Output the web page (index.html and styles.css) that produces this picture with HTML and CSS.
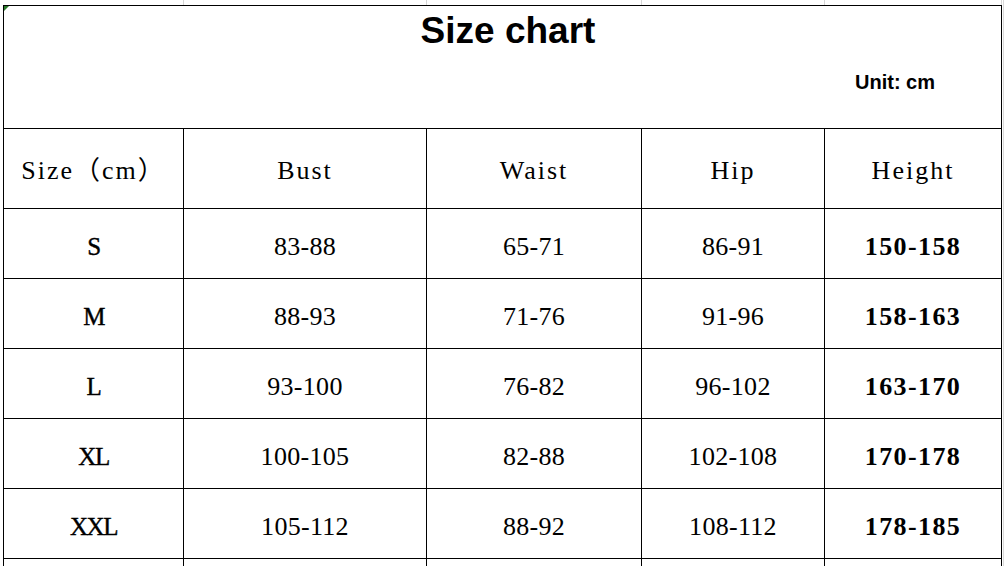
FILE: index.html
```html
<!DOCTYPE html>
<html>
<head>
<meta charset="utf-8">
<title>Size chart</title>
<link rel="stylesheet" href="styles.css">
</head>
<body>
<div class="sheet">
  <div class="sheet-main">
    <div class="strip">
      <div class="strip-cell w1"></div>
      <div class="strip-cell w2"></div>
      <div class="strip-cell w3"></div>
      <div class="strip-cell w4"></div>
      <div class="strip-cell w5"></div>
    </div>
    <div class="chart">
      <div class="title-cell">
        <span class="flag"></span>
        <div class="title">Size chart</div>
        <div class="unit">Unit: cm</div>
      </div>

      <div class="cell head">Size（cm）</div>
      <div class="cell head">Bust</div>
      <div class="cell head">Waist</div>
      <div class="cell head">Hip</div>
      <div class="cell head">Height</div>

      <div class="cell row size">S</div>
      <div class="cell row num">83-88</div>
      <div class="cell row num">65-71</div>
      <div class="cell row num">86-91</div>
      <div class="cell row num bold">150-158</div>

      <div class="cell row size">M</div>
      <div class="cell row num">88-93</div>
      <div class="cell row num">71-76</div>
      <div class="cell row num">91-96</div>
      <div class="cell row num bold">158-163</div>

      <div class="cell row size">L</div>
      <div class="cell row num">93-100</div>
      <div class="cell row num">76-82</div>
      <div class="cell row num">96-102</div>
      <div class="cell row num bold">163-170</div>

      <div class="cell row size">XL</div>
      <div class="cell row num">100-105</div>
      <div class="cell row num">82-88</div>
      <div class="cell row num">102-108</div>
      <div class="cell row num bold">170-178</div>

      <div class="cell row size">XXL</div>
      <div class="cell row num">105-112</div>
      <div class="cell row num">88-92</div>
      <div class="cell row num">108-112</div>
      <div class="cell row num bold">178-185</div>

      <div class="cell row"></div>
      <div class="cell row"></div>
      <div class="cell row"></div>
      <div class="cell row"></div>
      <div class="cell row"></div>
    </div>
  </div>
  <div class="edge"></div>
</div>
</body>
</html>
```

FILE: styles.css
```css
html, body {
  margin: 0;
  padding: 0;
  background: #ffffff;
  height: 566px;
  overflow: hidden;
}

.sheet {
  display: flex;
  align-items: stretch;
  margin-left: 3px;
  height: 640px;
}

.sheet-main {
  display: flex;
  flex-direction: column;
}

.strip {
  display: flex;
  height: 5px;
  margin-left: 1px;
}

.strip-cell {
  box-sizing: border-box;
  border-right: 1px solid #d6d6d6;
  height: 5px;
}

.w1 { width: 180px; }
.w2 { width: 243px; }
.w3 { width: 215px; }
.w4 { width: 183px; }
.w5 { width: 177px; }

.edge {
  width: 1px;
  margin-left: 1px;
  background: #d9d9d9;
}

.chart {
  display: grid;
  grid-template-columns: 180px 243px 215px 183px 177px;
  border-left: 1px solid #000;
  border-top: 1px solid #000;
}

.title-cell {
  grid-column: 1 / -1;
  position: relative;
  box-sizing: border-box;
  height: 123px;
  border-right: 1px solid #000;
  border-bottom: 1px solid #000;
  display: flex;
  flex-direction: column;
  font-family: "Liberation Sans", Arial, sans-serif;
  font-weight: bold;
  color: #000;
}

.flag {
  position: absolute;
  left: 0;
  top: 0;
  width: 0;
  height: 0;
  border-top: 5px solid #2b7a2b;
  border-right: 5px solid transparent;
}

.title {
  font-size: 37px;
  line-height: 37px;
  padding-top: 6px;
  padding-left: 11px;
  text-align: center;
}

.unit {
  font-size: 20px;
  line-height: 20px;
  margin-top: 23px;
  align-self: flex-end;
  margin-right: 66px;
}

.cell {
  box-sizing: border-box;
  border-right: 1px solid #000;
  border-bottom: 1px solid #000;
  display: flex;
  align-items: center;
  justify-content: center;
  color: #000;
  white-space: nowrap;
}

.head {
  height: 80px;
  padding-top: 4px;
  font-family: "Liberation Serif", "Noto Sans CJK SC", serif;
  font-size: 26px;
  line-height: 29px;
  letter-spacing: 2px;
}

.head:first-child {
  padding-left: 4px;
}

.row {
  height: 70px;
  padding-top: 6px;
}

.size {
  font-family: "Liberation Serif", serif;
  font-size: 25px;
  letter-spacing: -1.5px;
  -webkit-text-stroke: 0.4px #000;
}

.num {
  font-family: "Liberation Serif", "Times New Roman", serif;
  font-size: 26px;
  letter-spacing: 0.3px;
}

.num.bold {
  font-weight: bold;
  letter-spacing: 1.4px;
}
```
